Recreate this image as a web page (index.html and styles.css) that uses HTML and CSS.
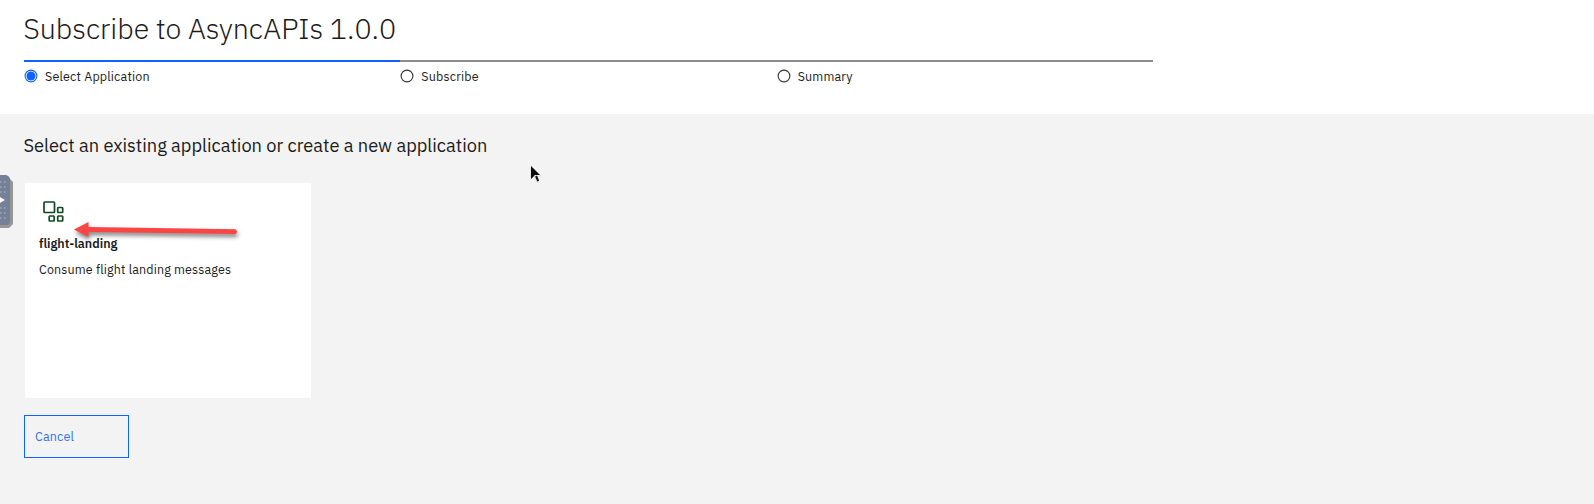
FILE: index.html
```html
<!DOCTYPE html>
<html lang="en">
<head>
<meta charset="utf-8">
<title>Subscribe to AsyncAPIs 1.0.0</title>
<link rel="stylesheet" href="styles.css">
</head>
<body>
<header class="header">
  <h1 class="title">Subscribe to AsyncAPIs 1.0.0</h1>
  <ol class="steps">
    <li class="step current"><svg class="radio" viewBox="0 0 14 14"><circle cx="7" cy="7" r="5.9"/><circle class="dot" cx="7" cy="7" r="4.5"/></svg><span class="label">Select Application</span></li>
    <li class="step"><svg class="radio" viewBox="0 0 14 14"><circle cx="7" cy="7" r="5.9"/></svg><span class="label">Subscribe</span></li>
    <li class="step"><svg class="radio" viewBox="0 0 14 14"><circle cx="7" cy="7" r="5.9"/></svg><span class="label">Summary</span></li>
  </ol>
</header>
<main class="main">
  <h2 class="heading">Select an existing application or create a new application</h2>
  <article class="card">
    <svg class="app-icon" viewBox="0 0 22 22"><rect x="1" y="1" width="10.5" height="10.5" rx=".7"/><rect x="14.7" y="6.5" width="5" height="5" rx=".7"/><rect x="6.2" y="15" width="5" height="5" rx=".7"/><rect x="14.7" y="15" width="5" height="5" rx=".7"/></svg>
    <h3 class="name">flight-landing</h3>
    <p class="desc">Consume flight landing messages</p>
  </article>
  <button class="cancel" type="button">Cancel</button>
</main>
<svg class="handle" viewBox="0 0 14 54">
  <path class="handle-shadow" d="M0 3h9l4 4v42l-4 4H0z"/>
  <path class="handle-body" d="M0 0h6q4 1 4 5v41q0 4-4 4H0z"/>
  <g class="grip"><path d="M0 7h6M0 12h6M0 17h6M0 33h6M0 38h6M0 43h6"/></g>
  <path class="handle-arrow" d="M0 22l5 3-5 3z"/>
</svg>
<svg class="arrow" viewBox="0 0 172 28">
  <path d="M4 11.5L18.5 4V9L165.500 11.2Q168.500 13.5 165.500 16L18.5 14V19z"/>
</svg>
<svg class="cursor" viewBox="0 0 14 20"><path class="cursor-edge" d="M1 1v13l3-3 3 6h2l-2-6h4z"/><path d="M1 1v13l3-3 1-1h5z"/><path class="cursor-tail" d="M6 11l2.2 5"/></svg>
</body>
</html>
```
FILE: styles.css
```css
* { box-sizing: border-box; }
body {
  margin: 0;
  height: 504px;
  overflow: hidden;
  position: relative;
  display: flex;
  flex-direction: column;
  background: #f3f3f3;
  color: #1c1c1c;
  font-family: "IBM Plex Sans", Roboto, sans-serif;
  font-size: 12.5px;
}
h1, h2, h3, p, ol { margin: 0; padding: 0; }
.header { height: 114px; padding: 9px 0 0 23.5px; background: #fff; }
.title { height: 51px; font-size: 28.6px; font-weight: 300; line-height: 40px; white-space: nowrap; }
.steps { display: flex; width: 1129px; margin-left: .5px; list-style: none; }
.step { flex: 1; display: flex; gap: 7px; height: 24px; padding-top: 7px; border-top: 2px solid #8d8d8d; }
.step.current { border-color: #0f62fe; }
.radio { width: 14px; height: 14px; fill: none; stroke: #333; stroke-width: 1.1; }
.current .radio { stroke: #0f62fe; }
.current .radio .dot { fill: #0f62fe; stroke: none; }
.label { line-height: 15px; letter-spacing: .17px; white-space: nowrap; }
.main { flex: 1; padding: 19px 24px 0; }
.heading { height: 50px; margin-left: -.5px; font-size: 18.25px; font-weight: 400; line-height: 24px; white-space: nowrap; }
.card { width: 286px; height: 215px; margin-left: 1px; padding: 18px 14px; background: #fff; }
.app-icon { display: block; width: 22px; height: 22px; margin: 0 0 12px 4px; fill: none; stroke: #0e4a21; stroke-width: 1.7; }
.name { font-size: 12.5px; font-weight: 600; line-height: 16px; }
.desc { margin-top: 10px; line-height: 16px; letter-spacing: .15px; }
.cancel { display: block; width: 105px; height: 43px; margin-top: 17px; padding: 0 10px 2px; border: 1px solid #0f62fe; background: transparent; color: #2f72f5; font: inherit; letter-spacing: .17px; text-align: left; }
.handle { position: absolute; left: 0; top: 175px; width: 14px; height: 54px; }
.handle-shadow { fill: #969696; }
.handle-body { fill: #738096; }
.grip { stroke: #9da8b8; stroke-width: 1.6; stroke-dasharray: 1.6 2.4; }
.handle-arrow { fill: #fff; }
.arrow { position: absolute; left: 70px; top: 218px; width: 172px; height: 28px; fill: #fb4444; filter: drop-shadow(1px 3px 2px rgba(0, 0, 0, .5)); }
.cursor { position: absolute; left: 530px; top: 165px; width: 14px; height: 20px; fill: #080808; }
.cursor-edge { fill: #fff; stroke: #bbb; stroke-width: .5; }
.cursor-tail { stroke: #111; stroke-width: 2; }
```
